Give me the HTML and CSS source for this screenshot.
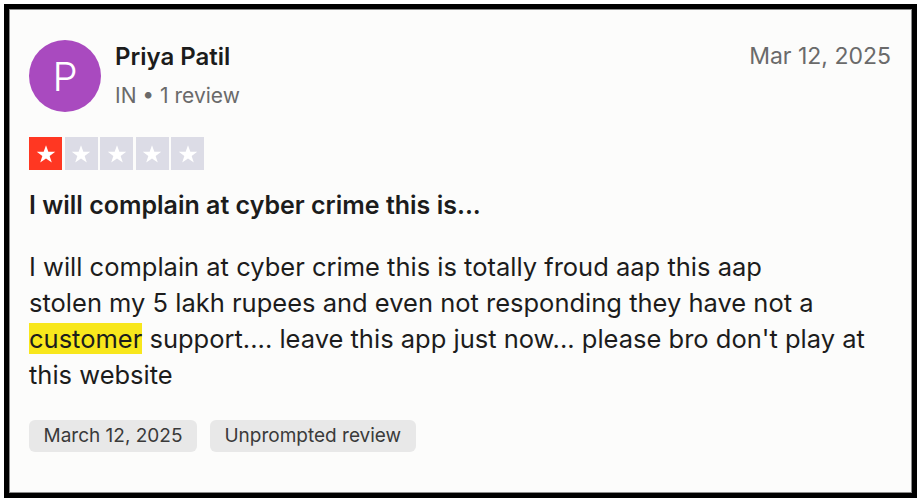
FILE: index.html
```html
<!DOCTYPE html>
<html>
<head>
<meta charset="utf-8">
<link rel="stylesheet" href="styles.css">
</head>
<body>
<div class="frame">
  <div class="card">
    <div class="header">
      <div class="avatar">P</div>
      <div class="who">
        <div class="name">Priya Patil</div>
        <div class="meta">IN • 1 review</div>
      </div>
      <div class="date">Mar 12, 2025</div>
    </div>
    <div class="stars">
      <span class="star on"><svg viewBox="0 0 24 24"><path d="M12 3.2l2.35 6.6h6.9l-5.6 4.1 2.15 6.7L12 16.4l-5.8 4.2 2.15-6.7-5.6-4.1h6.9z"/></svg></span>
      <span class="star"><svg viewBox="0 0 24 24"><path d="M12 3.2l2.35 6.6h6.9l-5.6 4.1 2.15 6.7L12 16.4l-5.8 4.2 2.15-6.7-5.6-4.1h6.9z"/></svg></span>
      <span class="star"><svg viewBox="0 0 24 24"><path d="M12 3.2l2.35 6.6h6.9l-5.6 4.1 2.15 6.7L12 16.4l-5.8 4.2 2.15-6.7-5.6-4.1h6.9z"/></svg></span>
      <span class="star"><svg viewBox="0 0 24 24"><path d="M12 3.2l2.35 6.6h6.9l-5.6 4.1 2.15 6.7L12 16.4l-5.8 4.2 2.15-6.7-5.6-4.1h6.9z"/></svg></span>
      <span class="star"><svg viewBox="0 0 24 24"><path d="M12 3.2l2.35 6.6h6.9l-5.6 4.1 2.15 6.7L12 16.4l-5.8 4.2 2.15-6.7-5.6-4.1h6.9z"/></svg></span>
    </div>
    <h2 class="title">I will complain at cyber crime this is...</h2>
    <p class="body">I will complain at cyber crime this is totally froud aap this aap<br>stolen my 5 lakh rupees and even not responding they have not a <mark class="hl">customer</mark> support.... leave this app just now... please bro don't play at this website</p>
    <div class="tags">
      <span class="tag">March 12, 2025</span>
      <span class="tag">Unprompted review</span>
    </div>
  </div>
</div>
</body>
</html>
```
FILE: styles.css
```css
html, body {
  margin: 0;
  padding: 0;
  background: #ffffff;
}
body {
  font-family: Inter, "Noto Sans", sans-serif;
  color: #1c1c1c;
}
.frame {
  margin: 4px 6px 6px 4px;
  border: 5px solid #000;
  height: 484px;
  box-sizing: content-box;
}
.card {
  border: 1px solid #8a8a8a;
  background: #fcfcfb;
  height: 482px;
  padding: 0 19px 0 19px;
  box-sizing: content-box;
}
.header {
  display: flex;
  align-items: flex-start;
  padding-top: 30px;
}
.avatar {
  width: 72px;
  height: 72px;
  border-radius: 50%;
  background: #a94abf;
  color: #fff;
  font-size: 40px;
  font-weight: 300;
  display: flex;
  align-items: center;
  justify-content: center;
  flex: none;
}
.who {
  margin-left: 14px;
  flex: 1;
  padding-top: 1px;
}
.name {
  font-size: 24px;
  font-weight: 600;
  color: #1c1c1c;
  line-height: 32px;
}
.meta {
  font-size: 21px;
  color: #6a6a6a;
  line-height: 30px;
  margin-top: 8px;
}
.date {
  font-size: 23px;
  color: #6a6a6a;
  line-height: 32px;
  padding-top: 0;
  margin-right: 1px;
}
.stars {
  display: flex;
  gap: 2.5px;
  margin-top: 25px;
}
.star {
  width: 33px;
  height: 33px;
  background: #dcdce6;
  display: flex;
  align-items: center;
  justify-content: center;
}
.star.on {
  background: #ff3722;
}
.star svg {
  width: 24px;
  height: 24px;
  fill: #fff;
}
.title {
  font-size: 25px;
  font-weight: 600;
  margin: 19px 0 0 0;
  line-height: 32px;
  color: #1c1c1c;
}
.body {
  font-size: 25.5px;
  line-height: 36px;
  margin: 28px 0 0 0;
  color: #1c1c1c;
}
.hl {
  display: inline-block;
  line-height: 31px;
  background: #f8e71c;
  color: #1c1c1c;
}
.tags {
  display: flex;
  gap: 13px;
  margin-top: 27px;
}
.tag {
  background: #e8e8e8;
  border-radius: 6px;
  font-size: 19px;
  color: #3a3a3a;
  padding: 0 14.5px;
  line-height: 32px;
}
```
